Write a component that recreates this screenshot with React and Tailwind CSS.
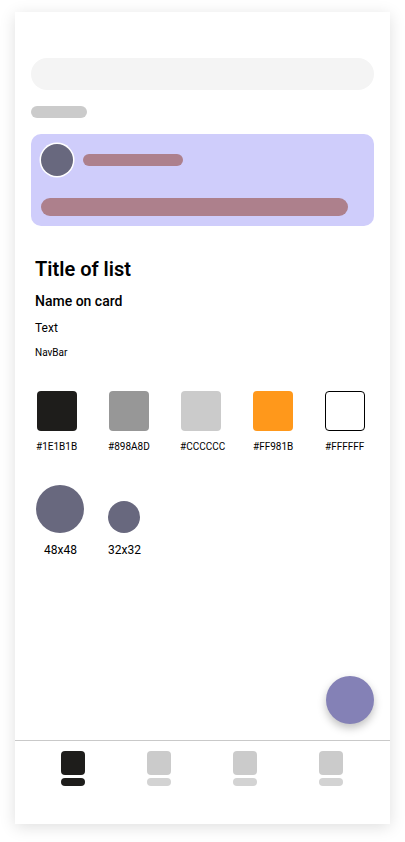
const swatches = [
  { label: '#1E1B1B', box: 'bg-[#1e1d1b]', text: '-ml-px' },
  { label: '#898A8D', box: 'bg-[#979797]', text: '-ml-px' },
  { label: '#CCCCCC', box: 'bg-[#cbcbcb]', text: '-ml-px' },
  { label: '#FF981B', box: 'bg-[#ff981b]', text: '' },
  { label: '#FFFFFF', box: 'border border-black bg-white', text: '' },
];

const tabs = [
  { icon: 'bg-[#1e1d1b]', label: 'bg-[#1e1d1b]' },
  { icon: 'bg-[#cbcbcb]', label: 'bg-[#d3d3d3]' },
  { icon: 'bg-[#cbcbcb]', label: 'bg-[#d3d3d3]' },
  { icon: 'bg-[#cbcbcb]', label: 'bg-[#d3d3d3]' },
];

function PreviewCard() {
  return (
    <div className="mt-4 h-[92px] rounded-[10px] bg-[#cfcdfb] p-2.5">
      <div className="flex items-center gap-2.5">
        <div className="size-8 rounded-full bg-[#68687e] shadow-[0_0_0_1.5px_#ffffff]" />
        <div className="h-3 w-[100px] rounded-full bg-[#ad808c]" />
      </div>
      <div className="mt-[22px] h-[18px] w-[307px] rounded-full bg-[#ad808c]" />
    </div>
  );
}

function Typography() {
  return (
    <div className="mt-[31px] flex flex-col pl-1 text-black">
      <h1 className="h-6 text-[20px] leading-6 font-semibold">Title of list</h1>
      <h2 className="mt-3 h-4 text-[14px] leading-4 font-medium">Name on card</h2>
      <p className="mt-3 h-[14px] text-[12px] leading-[14px]">Text</p>
      <p className="mt-3 h-3 text-[10px] leading-3">NavBar</p>
    </div>
  );
}

export default function App() {
  return (
    <div className="h-[842px] w-[405px] overflow-hidden bg-white pt-3 pl-[15px] font-['Roboto',sans-serif]">
      <div className="flex h-[812px] w-[375px] flex-col bg-white shadow-[0_3px_15px_rgba(0,0,0,0.13)]">
        <main className="flex flex-1 flex-col px-4 pt-[46px]">
          <div className="h-8 rounded-full bg-[#f4f4f4]" />
          <div className="mt-4 h-3 w-14 rounded-full bg-[#cbcbcb]" />
          <PreviewCard />
          <Typography />
          <div className="mt-8 flex gap-8 pl-1.5">
            {swatches.map((s) => (
              <div key={s.label} className="w-10 shrink-0">
                <div className={`size-10 rounded ${s.box}`} />
                <p className={`mt-[10px] text-[10px] leading-3 whitespace-nowrap ${s.text}`}>{s.label}</p>
              </div>
            ))}
          </div>
          <div className="mt-8 flex items-end gap-6 pl-[5px]">
            <div className="flex w-12 flex-col items-center">
              <div className="size-12 rounded-full bg-[#68687e]" />
              <p className="mt-[10px] ml-[1px] text-[12px] leading-[14px]">48x48</p>
            </div>
            <div className="flex w-8 flex-col">
              <div className="size-8 rounded-full bg-[#68687e]" />
              <p className="mt-[10px] text-[12px] leading-[14px] whitespace-nowrap">32x32</p>
            </div>
          </div>
          <button
            aria-label="Add"
            className="mt-auto mb-4 size-12 self-end rounded-full bg-[#8481b6] shadow-[0_4px_8px_rgba(0,0,0,0.25)]"
          />
        </main>
        <nav className="flex h-[84px] gap-[62px] border-t border-[#c9c9c9] pt-2.5 pl-[46px]">
          {tabs.map((t, i) => (
            <div key={i} className="flex flex-col gap-[3px]">
              <div className={`size-6 rounded ${t.icon}`} />
              <div className={`h-2 w-6 rounded-full ${t.label}`} />
            </div>
          ))}
        </nav>
      </div>
    </div>
  );
}
